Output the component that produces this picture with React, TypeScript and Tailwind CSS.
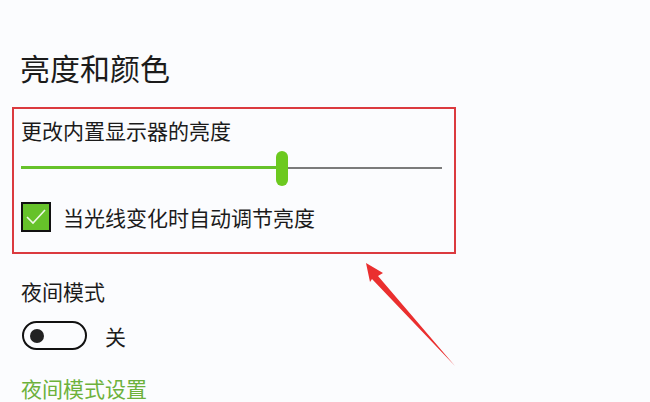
import React from "react";

const cjk = { fontFamily: '"Noto Sans CJK SC", "Noto Sans", sans-serif' };

function BrightnessSlider({ value }: { value: number }) {
  return (
    <div className="relative h-[35px] w-[421px]">
      <div className="absolute left-0 right-0 top-[16px] h-[2px] bg-[#7b7b7b]" />
      <div
        className="absolute left-0 top-[15px] h-[3px] bg-[#66c22a]"
        style={{ width: `${value * 100}%` }}
      />
      <div
        className="absolute top-0 h-[35px] w-[12px] -translate-x-1/2 rounded-full bg-[#6cc91f]"
        style={{ left: `${value * 100}%` }}
      />
    </div>
  );
}

function Arrow() {
  return (
    <svg
      className="absolute left-[360px] top-[258px]"
      width="100"
      height="112"
      viewBox="360 258 100 112"
    >
      <polygon points="366,263 383,273 378,276 455,366 372,279 370,282" fill="#ea2f2f" />
    </svg>
  );
}

export default function App() {
  return (
    <div
      className="relative h-[402px] w-[650px] overflow-hidden bg-[#fbfcfe] pl-[12px] text-[#1b1b1b]"
      style={cjk}
    >
      <h1 className="mt-[47px] pl-[8px] text-[30px] leading-[40px] font-normal">亮度和颜色</h1>

      <div className="mt-[20px] w-[444px] border-2 border-[#db3a3f] pl-[7px] pt-[7px] pb-[20px]">
        <div className="text-[21px] leading-[28px]">更改内置显示器的亮度</div>
        <div className="mt-[7px]">
          <BrightnessSlider value={0.62} />
        </div>
        <div className="mt-[16px] flex items-center">
          <div className="flex h-[30px] w-[30px] items-center justify-center border-2 border-[#111] bg-[#66c22a]">
            <svg width="22" height="18" viewBox="0 0 22 18">
              <path d="M2 9 L8 15 L20 2" fill="none" stroke="#eef8e6" strokeWidth="1.6" />
            </svg>
          </div>
          <span className="ml-[12px] text-[21px] leading-[28px]">当光线变化时自动调节亮度</span>
        </div>
      </div>

      <div className="mt-[23px] pl-[9px] text-[21px] leading-[28px]">夜间模式</div>
      <div className="mt-[16px] flex items-center pl-[10px]">
        <div className="flex h-[29px] w-[65px] items-center rounded-full border-[2.5px] border-[#111] pl-[6px]">
          <div className="h-[14px] w-[14px] rounded-full bg-[#222]" />
        </div>
        <span className="ml-[18px] text-[21px] leading-[28px]">关</span>
      </div>
      <div className="mt-[24px] pl-[9px] text-[21px] leading-[28px] text-[#6db13b]">夜间模式设置</div>

      <Arrow />
    </div>
  );
}
